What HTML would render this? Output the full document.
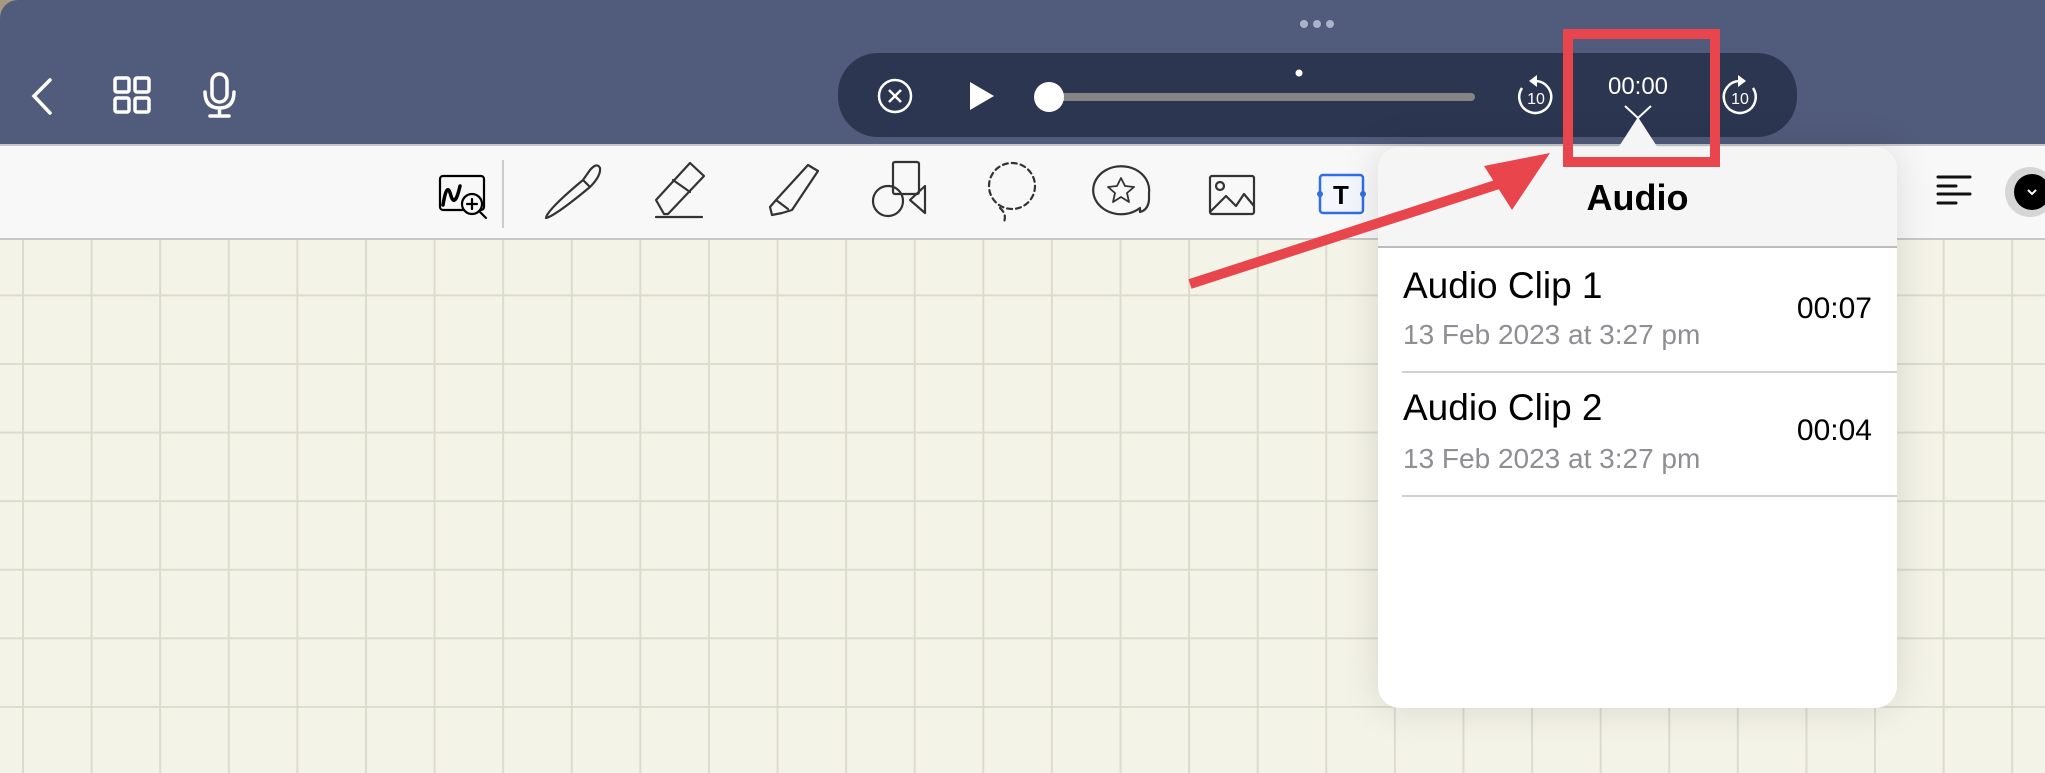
<!DOCTYPE html>
<html><head><meta charset="utf-8"><style>
*{margin:0;padding:0;box-sizing:border-box}
body{width:2045px;height:773px;overflow:hidden;position:relative;font-family:"Liberation Sans",sans-serif;
background-color:#f4f3e7;
background-image:linear-gradient(to right,#dcdccd 2px,transparent 2px),linear-gradient(to bottom,#dcdccd 2px,transparent 2px);
background-size:68.6px 68.6px;background-position:22px 20px}
.top{position:absolute;left:0;top:0;width:2045px;height:144px;background:#515b7b;border-top-left-radius:18px}
.corner{position:absolute;left:0;top:0;width:30px;height:30px;background:#a59a80;z-index:-1}
.tb{position:absolute;left:0;top:144px;width:2045px;height:96px;background:#f8f8f8;border-top:2px solid #c8c8c8;border-bottom:2px solid #c8c8c8}
.pill{position:absolute;left:838px;top:53px;width:959px;height:84px;border-radius:40px;background:#2c3651}
.pop{position:absolute;left:1378px;top:147px;width:519px;height:561px;border-radius:22px;background:#fff;box-shadow:0 0 40px rgba(0,0,0,.12);overflow:hidden}
.hdr{height:101px;background:#f5f5f5;border-bottom:2px solid #bcbcbc;margin:0;text-align:center;font-weight:bold;font-size:36px;padding-top:30px;color:#000}
.t{position:absolute;white-space:nowrap}
.sep{position:absolute;left:24px;right:0;height:2px;background:#d0d0d0}
svg{position:absolute;overflow:visible}
</style></head><body>
<div class="corner"></div>
<div class="top"></div>
<div class="tb"></div>
<svg width="2045" height="773" style="left:0;top:0">
 <g fill="#aab2cc"><circle cx="1304" cy="24" r="4"/><circle cx="1317" cy="24" r="4"/><circle cx="1330" cy="24" r="4"/></g>
 <g stroke="#fff" stroke-width="3.5" fill="none" stroke-linecap="round">
  <path d="M50 80 L34 96 L50 113"/>
  <rect x="115" y="78" width="14" height="14" rx="2"/><rect x="135" y="78" width="14" height="14" rx="2"/>
  <rect x="115" y="98" width="14" height="14" rx="2"/><rect x="135" y="98" width="14" height="14" rx="2"/>
  <rect x="212" y="74" width="15" height="28" rx="7.5"/><path d="M205 92 Q205 108 219.5 108 Q234 108 234 92 M219.5 108 V116 M210 116 H229"/>
 </g>
</svg>
<div class="pill"></div>
<svg width="2045" height="773" style="left:0;top:0">
 <g stroke="#fff" fill="none" stroke-width="2.5">
  <circle cx="895" cy="96" r="16"/><path d="M889 90 L901 102 M901 90 L889 102"/>
  <path d="M1536 81 A16 16 0 1 1 1522 88"/>
  <path d="M1739 81 A16 16 0 1 0 1753 88"/>
  <path d="M1625 106 L1638 118 L1651 106" stroke-width="2"/>
 </g>
 <path d="M1529 81 L1537 75 L1537 87Z M1746 81 L1738 75 L1738 87Z" fill="#fff"/>
 <path d="M970 82 L994 96 L970 110 Z" fill="#fff"/>
 <circle cx="1299" cy="73" r="3.5" fill="#fff"/>
 <rect x="1048" y="93" width="427" height="8" rx="4" fill="#858585"/>
 <circle cx="1049" cy="97" r="15" fill="#fff"/>
 <text x="1536" y="104" font-size="16" fill="#fff" text-anchor="middle" font-family="Liberation Sans">10</text>
 <text x="1740" y="104" font-size="16" fill="#fff" text-anchor="middle" font-family="Liberation Sans">10</text>
 <text x="1638" y="94" font-size="24" fill="#fff" text-anchor="middle" font-family="Liberation Sans">00:00</text>
</svg>
<svg width="2045" height="773" style="left:0;top:0">
 <g stroke="#333" fill="none" stroke-width="2.2" stroke-linecap="round" stroke-linejoin="round">
  <rect x="440" y="176" width="44" height="34" rx="3" stroke="#000"/>
  <path d="M443 205 Q447 180 451 196 Q455 208 460 186" stroke="#000" stroke-width="3.5"/>
  <circle cx="472" cy="204" r="10" fill="#f8f8f8" stroke="#000"/><path d="M472 199 V209 M467 204 H477 M479 211 L486 218" stroke="#000"/>
  <path d="M546 218 Q547 210 583 180 L590 187 Q555 216 546 218 Z M583 180 L590 170 Q597 162 600 168 Q601 176 590 187"/>
  <path d="M664 214 L656 200 L690 163 L704 176 L668 214 Z M673 180 L690 192 M656 217 L702 217"/>
  <path d="M772 215 L770 207 L776 200 L808 165 L818 171 L792 210 L782 213 Z M776 200 L788 209"/>
  <rect x="893" y="162" width="26" height="32" rx="2"/><circle cx="888" cy="201" r="15"/><path d="M925 186 L910 200 L925 213 Z"/>
  <circle cx="1012" cy="186" r="23" stroke-dasharray="5 4"/><path d="M1000 208 Q1007 214 1004 222" stroke-dasharray="5 4"/>
  <path d="M1140 208 A28 24 0 1 1 1149 193 L1149 200 Q1148 210 1140 212 Z"/>
  <path d="M1121 178 l4 8 9 1 -7 6 2 9 -8 -5 -8 5 2 -9 -7 -6 9 -1z" stroke-width="1.8"/>
  <rect x="1210" y="176" width="44" height="38" rx="2"/><circle cx="1220" cy="186" r="4"/><path d="M1210 212 L1226 196 L1236 206 L1244 194 L1254 206"/>
 </g>
 <rect x="1320" y="175" width="43" height="38" rx="3" stroke="#2f6fe0" stroke-width="2.5" fill="#f3f6fd"/>
 <circle cx="1320" cy="194" r="3" fill="#2f6fe0"/><circle cx="1363" cy="194" r="3" fill="#2f6fe0"/>
 <text x="1341" y="204" font-size="26" font-weight="bold" text-anchor="middle" font-family="Liberation Sans">T</text>
 <line x1="503" y1="160" x2="503" y2="228" stroke="#ccc" stroke-width="2"/>
 <g stroke="#111" stroke-width="3" stroke-linecap="round"><path d="M1938 177 H1970 M1938 186 H1956 M1938 194 H1970 M1938 203 H1956"/></g>
 <circle cx="2030" cy="192" r="25" fill="#d6d6d6"/><circle cx="2032" cy="192" r="18" fill="#000"/>
 <path d="M2028 190 L2032 194 L2036 190" stroke="#fff" stroke-width="2" fill="none"/>
</svg>
<div class="pop">
 <div class="hdr">Audio</div>
 <div class="t" style="left:25px;top:118px;font-size:37px">Audio Clip 1</div>
 <div class="t" style="left:25px;top:172px;font-size:28px;color:#8e8e93">13 Feb 2023 at 3:27 pm</div>
 <div class="t" style="right:25px;top:145px;font-size:30px">00:07</div>
 <div class="sep" style="top:224px"></div>
 <div class="t" style="left:25px;top:240px;font-size:37px">Audio Clip 2</div>
 <div class="t" style="left:25px;top:296px;font-size:28px;color:#8e8e93">13 Feb 2023 at 3:27 pm</div>
 <div class="t" style="right:25px;top:267px;font-size:30px">00:04</div>
 <div class="sep" style="top:348px"></div>
</div>
<svg width="2045" height="773" style="left:0;top:0">
 <path d="M1618 148 L1638 117 L1658 148 Z" fill="#f5f5f5"/>
 <rect x="1568" y="34" width="147" height="128" fill="none" stroke="#e8464c" stroke-width="10"/>
 <line x1="1190" y1="284" x2="1505" y2="182" stroke="#e8464c" stroke-width="10"/>
 <path d="M1550 153 L1484 166 L1512 210 Z" fill="#e8464c"/>
</svg>
</body></html>
